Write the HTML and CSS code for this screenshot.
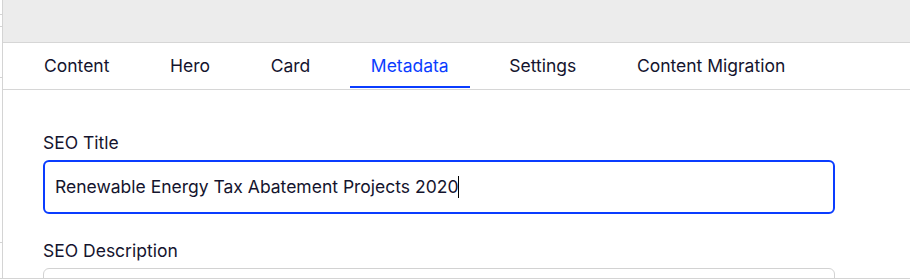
FILE: index.html
```html
<!DOCTYPE html>
<html>
    <head>
        <meta charset="utf-8" />
        <title>Metadata</title>
        <link rel="stylesheet" href="styles.css">
    </head>
    <body>
        <div class="frame">
            <div class="gutter">
                <div class="tick" style="height: 14px"></div>
                <div class="tick" style="height: 11px"></div>
                <div class="tick" style="height: 50px"></div>
                <div class="tick" style="height: 164px"></div>
                <div class="tick" style="height: 36px"></div>
            </div>
            <div class="panel">
                <div class="toolbar"></div>
                <nav class="tabs">
                    <a class="tab">Content</a>
                    <a class="tab">Hero</a>
                    <a class="tab">Card</a>
                    <a class="tab active">Metadata</a>
                    <a class="tab">Settings</a>
                    <a class="tab">Content Migration</a>
                </nav>
                <div class="form">
                    <div class="field">
                        <label class="label">SEO Title</label>
                        <div class="input focused">Renewable Energy Tax Abatement Projects 2020<span class="caret"></span></div>
                    </div>
                    <div class="field">
                        <label class="label">SEO Description</label>
                        <div class="input"></div>
                    </div>
                </div>
            </div>
        </div>
    </body>
</html>
```

FILE: styles.css
```css
body {
    margin: 0;
    background: #ffffff;
    font-family: Inter, "Noto Sans", sans-serif;
    color: #14142e;
}
.frame {
    display: flex;
    height: 278px;
    border-bottom: 1px solid #d4d4d4;
    overflow: hidden;
}
.gutter {
    width: 2px;
    flex: none;
    border-right: 1px solid #d4d4d4;
}
.tick {
    border-bottom: 1px solid #d4d4d4;
}
.panel {
    flex: 1;
    min-width: 0;
}
.toolbar {
    height: 42px;
    background: #ececec;
    border-bottom: 1px solid #d6d6d6;
}
.tabs {
    display: flex;
    gap: 18.6px;
    padding: 0 0 0 20px;
    border-bottom: 1px solid #d6d6d6;
}
.tab {
    display: block;
    padding: 0 21px 0 21px;
    height: 43px;
    line-height: 46px;
    font-size: 17.5px;
    border-bottom: 2px solid transparent;
    margin-bottom: 1px;
}
.tab.active {
    color: #0a3cff;
    border-bottom-color: #0a3cff;
}
.form {
    padding: 41px 0 0 40px;
}
.field {
    margin-bottom: 25px;
}
.label {
    display: block;
    font-size: 17.5px;
    line-height: 24px;
    margin-bottom: 5px;
}
.input {
    box-sizing: border-box;
    width: 792px;
    height: 54px;
    border: 1px solid #d2d2d2;
    border-radius: 6px;
    padding: 0 11px;
    font-size: 17.5px;
    line-height: 52px;
}
.input.focused {
    border: 2px solid #0a3cff;
    line-height: 50px;
    padding: 0 10px;
}
.caret {
    display: inline-block;
    width: 1px;
    height: 22px;
    background: #000000;
    vertical-align: -5px;
}
```
